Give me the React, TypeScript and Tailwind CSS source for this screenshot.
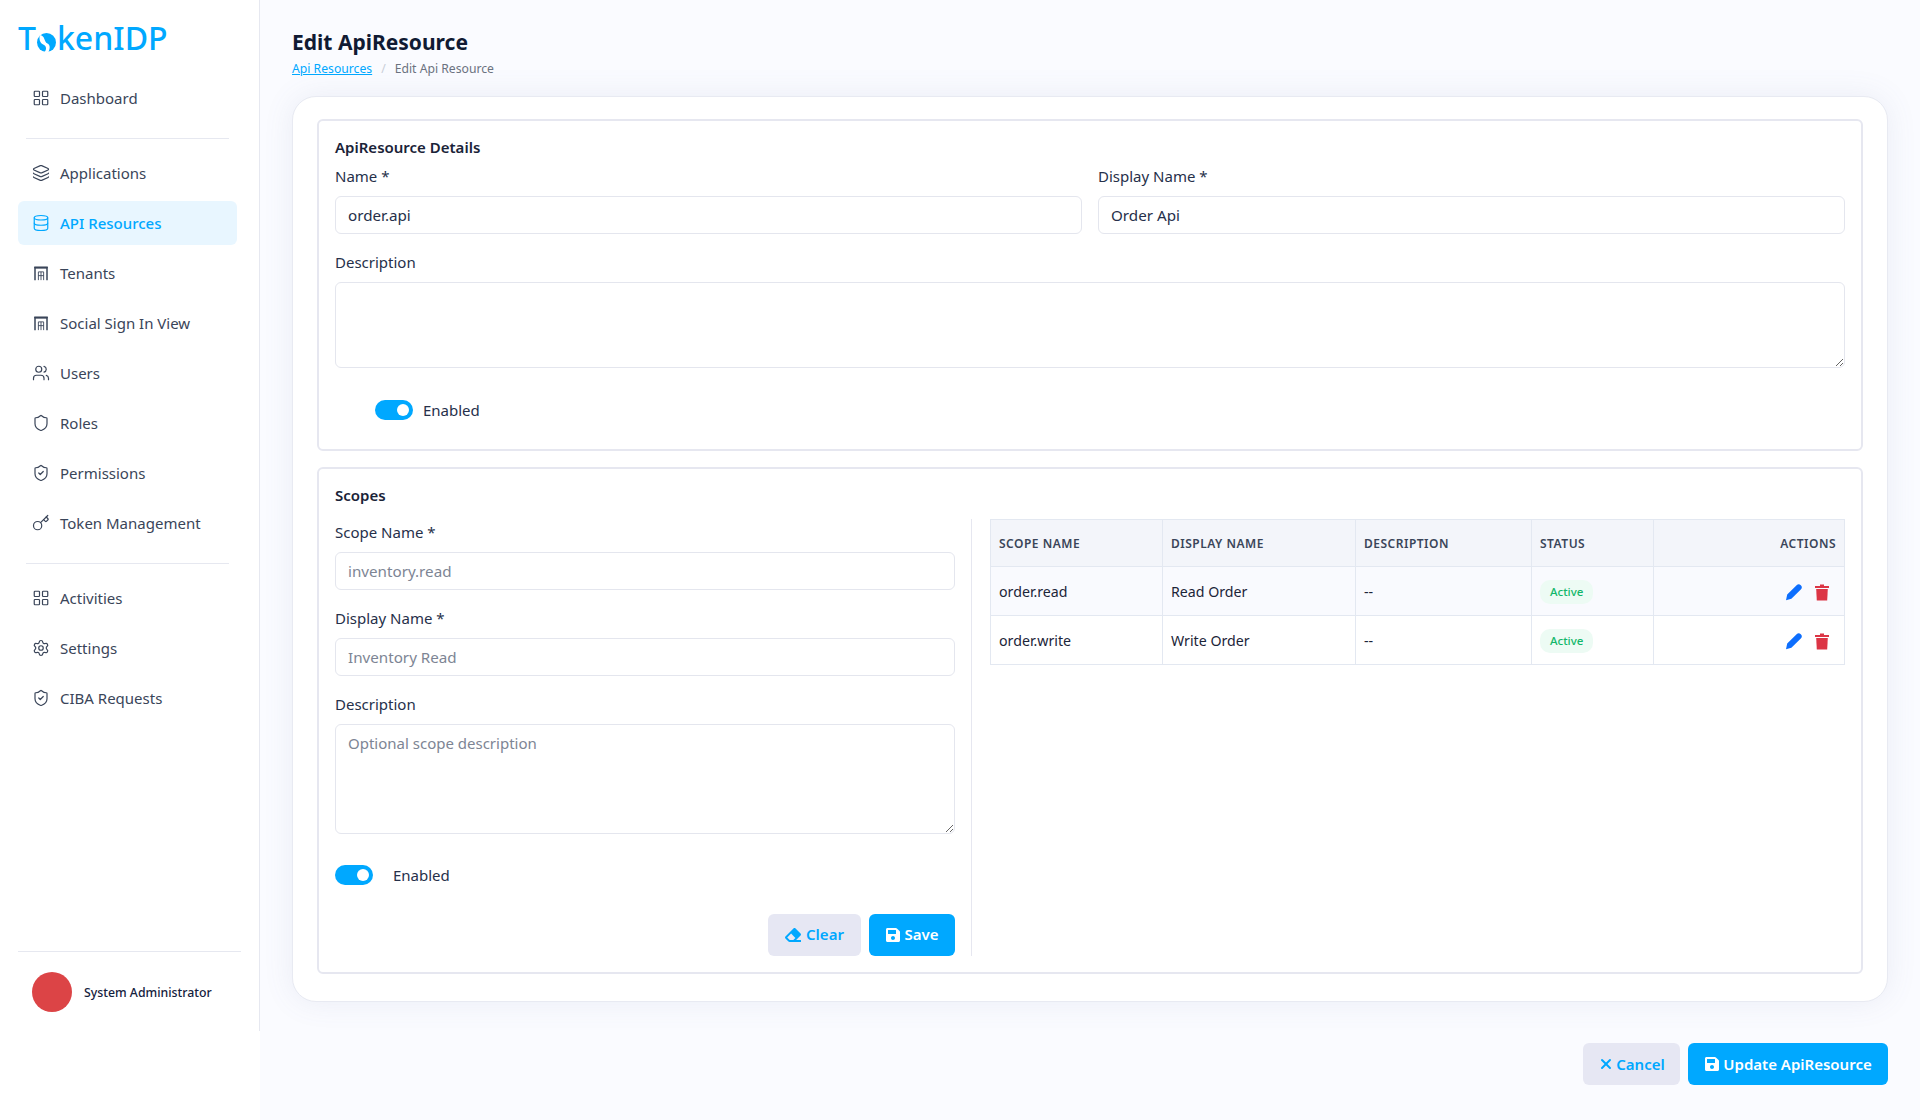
import { Database, Key, LayoutGrid, Layers, Settings, Shield, ShieldCheck, Users, X, type LucideProps } from "lucide-react";
import { FaEraser, FaSave } from "react-icons/fa";

const font = { fontFamily: '"Noto Sans", "Open Sans", sans-serif' };

function TenantIcon({ size = 18 }: LucideProps) {
  return (
    <svg width={size} height={size} viewBox="0 0 24 24" fill="none" stroke="currentColor">
      <path d="M4 21.5V5h16v16.5" strokeWidth={2} />
      <path d="M3 4.5h18" strokeWidth={2.4} />
      <path d="M8.5 21.5V10.5h7v11M12 10.5v11M8.5 15.5h7" strokeWidth={1.2} />
    </svg>
  );
}

function PencilIcon() {
  return (
    <svg width="18" height="18" viewBox="0 0 18 18" fill="#0d6efd">
      <path d="M1 17.2 L2.2 11.6 L11.6 2.2 a2.7 2.7 0 0 1 4.2 4.2 L6.4 15.8Z" />
    </svg>
  );
}

function TrashIcon() {
  return (
    <svg width="14" height="17" viewBox="0 0 14 17" fill="#dc3545">
      <path d="M5 0.5h4v1.5h5v2H0v-2h5z" />
      <path d="M1.2 5h11.6l-.6 11.5H1.8z" />
    </svg>
  );
}

function LogoO() {
  return (
    <svg width="19" height="19" viewBox="0 0 20 20" className="mx-[1px] mb-[2px] shrink-0">
      <circle cx="10" cy="10" r="10" fill="#00a8ff" />
      <path d="M3 2 C9 3 7 9 11 11 C14 12.5 14 16 12 20 L8 20 C11 16 9 13 6.5 12 C3 10.5 2 6 3 2Z" fill="white" />
    </svg>
  );
}

const groups = [
  [{ label: "Dashboard", icon: LayoutGrid }],
  [
    { label: "Applications", icon: Layers },
    { label: "API Resources", icon: Database, active: true },
    { label: "Tenants", icon: TenantIcon },
    { label: "Social Sign In View", icon: TenantIcon },
    { label: "Users", icon: Users },
    { label: "Roles", icon: Shield },
    { label: "Permissions", icon: ShieldCheck },
    { label: "Token Management", icon: Key },
  ],
  [
    { label: "Activities", icon: LayoutGrid },
    { label: "Settings", icon: Settings },
    { label: "CIBA Requests", icon: ShieldCheck },
  ],
];

const scopes = [
  { name: "order.read", display: "Read Order", odd: true },
  { name: "order.write", display: "Write Order", odd: false },
];

function Sidebar() {
  return (
    <aside className="w-[260px] shrink-0 bg-white">
      <div className="flex h-[1031px] flex-col border-r border-[#e6e8f0] pl-[18px] pr-[18px]">
        <div className="flex h-[54px] items-end pt-[24px] text-[32px] font-medium leading-none text-[#00a8ff]">
          <span>T</span>
          <LogoO />
          <span>kenIDP</span>
        </div>
        <nav className="mt-[22px]">
          {groups.map((items, i) => (
            <div key={i}>
              {i > 0 && <div className="mx-[8px] mb-[12px] mt-[18px] h-px w-[203px] bg-[#e6e8f0]" />}
              {items.map((item) => (
                <a
                  key={item.label}
                  className={
                    item.active
                      ? "mb-[6px] flex h-[44px] w-[219px] items-center gap-[10px] rounded-[6px] bg-[#e8f6ff] px-[14px] text-[15px] font-medium text-[#00a8ff]"
                      : "mb-[6px] flex h-[44px] w-[219px] items-center gap-[10px] rounded-[6px] px-[14px] text-[15px] text-[#3a4559]"
                  }
                >
                  <item.icon size={18} strokeWidth={1.6} />
                  {item.label}
                </a>
              ))}
            </div>
          ))}
        </nav>
        <div className="mt-auto w-[223px] border-t border-[#e6e8f0] pb-[19px] pl-[14px] pt-[20px]">
          <div className="flex items-center gap-[12px]">
            <div className="h-[40px] w-[40px] rounded-full bg-[#dc4446]" />
            <span className="mt-[2px] text-[12.3px] font-medium text-[#14213d]">System Administrator</span>
          </div>
        </div>
      </div>
    </aside>
  );
}

function Field({ label, value, placeholder }: { label: string; value?: string; placeholder?: string }) {
  return (
    <div>
      <div className="mb-[10px] h-[20px] text-[15px] leading-[20px] text-[#26304a]">{label}</div>
      <input
        readOnly
        value={value}
        placeholder={placeholder}
        className="block h-[38px] w-full rounded-[6px] border border-[#e4e6ee] bg-white px-[12px] text-[15.2px] text-[#26304a] outline-none placeholder:text-[#7d8594]"
      />
    </div>
  );
}

function Toggle() {
  return (
    <span className="flex h-[20px] w-[38px] items-center justify-end rounded-full bg-[#00a8ff] pr-[4px]">
      <span className="h-[12px] w-[12px] rounded-full bg-white" />
    </span>
  );
}

function Area({ label, placeholder, height }: { label: string; placeholder?: string; height: string }) {
  return (
    <div>
      <div className="mb-[10px] h-[20px] text-[15px] leading-[20px] text-[#26304a]">{label}</div>
      <textarea
        readOnly
        placeholder={placeholder}
        className={`block w-full rounded-[6px] border border-[#e4e6ee] bg-white px-[12px] py-[7px] text-[15px] text-[#26304a] outline-none placeholder:text-[#7d8594] ${height}`}
      />
    </div>
  );
}

function ScopeTable() {
  const th = "border border-[#e3e8f1] bg-[#f3f5fa] px-[8px] pt-[2px] text-[12px] font-semibold uppercase tracking-[0.5px] text-[#3a4559]";
  const td = "border border-[#e3e8f1] px-[8px] pt-[2px] text-[14.2px] text-[#1c2539]";
  return (
    <table className="w-full table-fixed border-collapse">
      <colgroup>
        <col className="w-[172px]" />
        <col className="w-[193px]" />
        <col className="w-[176px]" />
        <col className="w-[122px]" />
        <col />
      </colgroup>
      <thead>
        <tr className="h-[47px]">
          <th className={`${th} text-left`}>Scope Name</th>
          <th className={`${th} text-left`}>Display Name</th>
          <th className={`${th} text-left`}>Description</th>
          <th className={`${th} text-left`}>Status</th>
          <th className={`${th} text-right`}>Actions</th>
        </tr>
      </thead>
      <tbody>
        {scopes.map((s) => (
          <tr key={s.name} className={s.odd ? "h-[49px] bg-[#f9fafe]" : "h-[49px] bg-white"}>
            <td className={td}>{s.name}</td>
            <td className={td}>{s.display}</td>
            <td className={td}>--</td>
            <td className={td}>
              <span className="inline-flex h-[24px] items-center rounded-[10px] bg-[#edfbf4] px-[10px] text-[11.5px] font-medium text-[#12b76a]">
                Active
              </span>
            </td>
            <td className={td}>
              <div className="flex items-center justify-end gap-[12px] pr-[7px]">
                <PencilIcon />
                <TrashIcon />
              </div>
            </td>
          </tr>
        ))}
      </tbody>
    </table>
  );
}

export default function App() {
  return (
    <div className="flex min-h-[1120px] bg-[#fafbff]" style={font}>
      <Sidebar />
      <main className="flex-1 px-[32px] pt-[28px]">
        <h1 className="h-[28px] text-[21px] font-bold leading-[29px] text-[#101a33]">Edit ApiResource</h1>
        <div className="mt-[4px] flex h-[18px] items-center text-[12.2px] leading-[18px]">
          <a className="text-[#00a8ff] underline">Api Resources</a>
          <span className="mx-[9px] text-[#c9ced8]">/</span>
          <span className="text-[#6b7280]">Edit Api Resource</span>
        </div>
        <div className="mt-[18px] rounded-[24px] border border-[#e8eaf2] bg-white px-[24px] pb-[27px] pt-[22px] shadow-[0_0_30px_rgba(100,110,160,0.1)]">
          <section className="h-[332px] rounded-[6px] border-2 border-[#e6e7f0] px-[16px] pt-[14px]">
            <h2 className="h-[24px] text-[15px] font-semibold leading-[24px] text-[#1a2338]">ApiResource Details</h2>
            <div className="mt-[7px] grid grid-cols-2 gap-[16px]">
              <Field label="Name *" value="order.api" />
              <Field label="Display Name *" value="Order Api" />
            </div>
            <div className="mt-[18px]">
              <Area label="Description" height="h-[86px]" />
            </div>
            <div className="mt-[31px] flex items-center gap-[10px] pl-[40px] text-[15px] text-[#26304a]">
              <Toggle />
              Enabled
            </div>
          </section>
          <section className="mt-[16px] h-[507px] rounded-[6px] border-2 border-[#e6e7f0] px-[16px] pt-[14px]">
            <h2 className="h-[24px] text-[15px] font-semibold leading-[24px] text-[#1a2338]">Scopes</h2>
            <div className="mt-[12px] flex">
              <div className="w-[637px] border-r border-[#e6e7f0] pr-[16px] pt-[3px]">
                <div className="flex flex-col gap-[18px]">
                  <Field label="Scope Name *" placeholder="inventory.read" />
                  <Field label="Display Name *" placeholder="Inventory Read" />
                  <Area label="Description" placeholder="Optional scope description" height="h-[110px]" />
                </div>
                <div className="mt-[30px] flex items-center gap-[20px] text-[15px] text-[#26304a]">
                  <Toggle />
                  Enabled
                </div>
                <div className="mt-[27px] flex justify-end gap-[8px]">
                  <button className="flex h-[42px] w-[93px] items-center justify-center gap-[5px] rounded-[6px] bg-[#e6e7f3] text-[15px] font-semibold text-[#00a8ff]">
                    <FaEraser size={16} />
                    Clear
                  </button>
                  <button className="flex h-[42px] w-[86px] items-center justify-center gap-[3px] rounded-[6px] bg-[#00a8ff] text-[15px] font-semibold text-white">
                    <FaSave size={16} />
                    Save
                  </button>
                </div>
              </div>
              <div className="min-w-0 flex-1 pl-[18px]">
                <ScopeTable />
              </div>
            </div>
          </section>
        </div>
        <div className="mt-[41px] flex justify-end gap-[8px]">
          <button className="flex h-[42px] w-[97px] items-center justify-center gap-[2px] rounded-[6px] bg-[#e6e7f3] text-[15px] font-semibold text-[#00a8ff]">
            <X size={16} strokeWidth={3} />
            Cancel
          </button>
          <button className="flex h-[42px] w-[200px] items-center justify-center gap-[3px] rounded-[6px] bg-[#00a8ff] text-[15px] font-semibold text-white">
            <FaSave size={16} />
            Update ApiResource
          </button>
        </div>
      </main>
    </div>
  );
}
